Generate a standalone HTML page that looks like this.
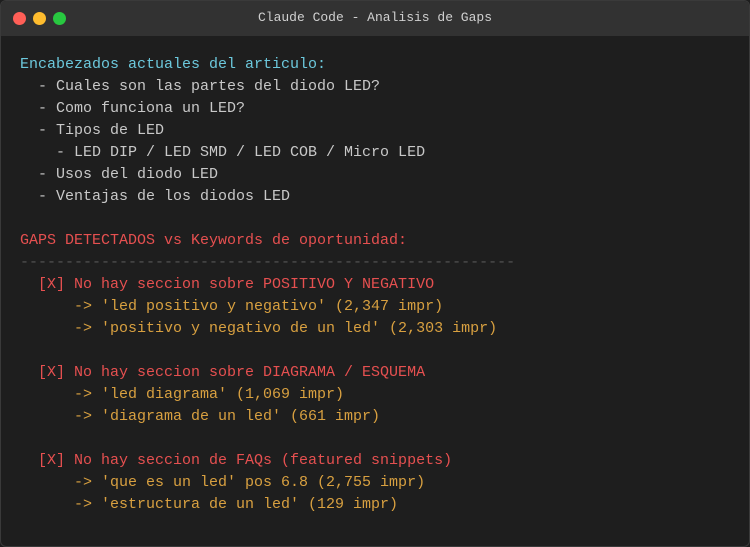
<!DOCTYPE html><html><head><style>
body{margin:0;background:#1e1e1e;width:750px;height:547px;overflow:hidden}
.win{position:absolute;left:0;top:0;width:748px;height:545px;border:1px solid #3a3a3a;border-radius:6px;background:#1e1e1e;overflow:hidden}
.bar{height:35px;background:#323232;position:relative}
.d{position:absolute;top:11px;width:13px;height:13px;border-radius:50%}
.t{position:absolute;left:0;right:0;top:9px;text-align:center;color:#d0d0d0;font:13px "Liberation Mono",monospace}
pre{margin:0;position:absolute;left:19px;top:53px;font:15px/22px "Liberation Mono",monospace;color:#c8c8c8}
.c{color:#6cc8dc}.r{color:#e65050}.o{color:#d8a040}.g{color:#555}
</style></head><body><div class="win"><div class="bar">
<div class="d" style="left:12px;background:#ff5f57"></div><div class="d" style="left:32px;background:#febc2e"></div><div class="d" style="left:52px;background:#28c840"></div>
<div class="t">Claude Code - Analisis de Gaps</div></div>
<pre><span class="c">Encabezados actuales del articulo:</span>
  - Cuales son las partes del diodo LED?
  - Como funciona un LED?
  - Tipos de LED
    - LED DIP / LED SMD / LED COB / Micro LED
  - Usos del diodo LED
  - Ventajas de los diodos LED

<span class="r">GAPS DETECTADOS vs Keywords de oportunidad:</span>
<span class="g">-------------------------------------------------------</span>
<span class="r">  [X] No hay seccion sobre POSITIVO Y NEGATIVO</span>
<span class="o">      -&gt; 'led positivo y negativo' (2,347 impr)
      -&gt; 'positivo y negativo de un led' (2,303 impr)</span>

<span class="r">  [X] No hay seccion sobre DIAGRAMA / ESQUEMA</span>
<span class="o">      -&gt; 'led diagrama' (1,069 impr)
      -&gt; 'diagrama de un led' (661 impr)</span>

<span class="r">  [X] No hay seccion de FAQs (featured snippets)</span>
<span class="o">      -&gt; 'que es un led' pos 6.8 (2,755 impr)
      -&gt; 'estructura de un led' (129 impr)</span></pre>
</div></body></html>
